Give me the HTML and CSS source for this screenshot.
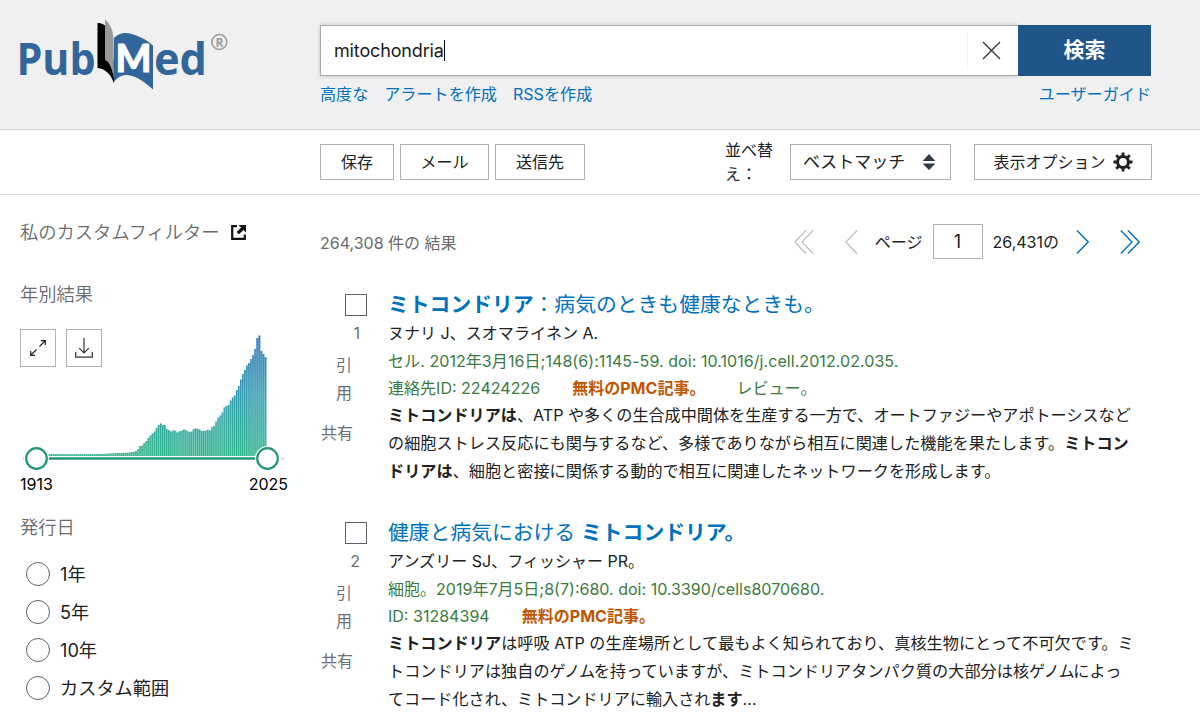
FILE: index.html
```html
<!DOCTYPE html>
<html lang="ja">
<head>
  <meta charset="UTF-8" />
  <title>mitochondria - PubMed</title>
  <link rel="stylesheet" href="styles.css">
</head>
<body>
  <header class="header">
    <a class="logo">
      <svg width="214" height="76" viewBox="16 17 214 76">
        <text class="logo-text" x="16.500" y="74.500" textLength="79" lengthAdjust="spacingAndGlyphs">Pub</text>
        <path d="M97.500 23 Q104 23 107 28 L114 62 V83.500 Q109 69 97.500 68 Z" fill="#000"/>
        <path d="M105 19.500 Q113 26 113.500 38 L114 79 Q111 62 105 60 Z" fill="#999"/>
        <path d="M114 38 Q121 31 132 34 Q145 38 153 45.500 V89.500 Q126 65 114 82 Z" fill="#326599"/>
        <text class="logo-m" x="115.500" y="71.500" textLength="36" lengthAdjust="spacingAndGlyphs">M</text>
        <text class="logo-text" x="154" y="74.500" textLength="53" lengthAdjust="spacingAndGlyphs">ed</text>
        <circle cx="219.300" cy="42" r="7.500" fill="none" stroke="#999" stroke-width="1.500"/>
        <text class="logo-r" x="215.500" y="46.500">R</text>
      </svg>
    </a>
    <div class="search">
      <div class="search-row">
        <div class="search-input"><span class="query">mitochondria</span><i class="caret"></i>
          <span class="clear">
            <svg width="19" height="19" viewBox="0 0 19 19"><path d="M1 1 L18 18 M18 1 L1 18" fill="none" stroke="#333" stroke-width="1.300"/></svg>
          </span>
        </div>
        <button class="search-btn">検索</button>
      </div>
      <div class="search-links">
        <a>高度な</a><a>アラートを作成</a><a>RSSを作成</a><a class="guide">ユーザーガイド</a>
      </div>
    </div>
  </header>

  <div class="toolbar">
    <button class="btn save">保存</button>
    <button class="btn email">メール</button>
    <button class="btn send">送信先</button>
    <div class="sort-label">並べ替え：</div>
    <div class="sort-select"><span>ベストマッチ</span>
      <svg width="12" height="16" viewBox="0 0 12 16"><path d="M0 7 Q0 6.500 .5 6 L6 0 L11.500 6 Q12 6.500 12 7 Z M0 9.500 H12 Q12 10 11.500 10.500 L6 16 L.5 10.500 Q0 10 0 9.500 Z" fill="#323a45"/></svg>
    </div>
    <button class="btn display"><span>表示オプション</span>
      <svg width="20" height="20" viewBox="-10 -10 20 20">
        <circle r="5.400" fill="none" stroke="#212121" stroke-width="3"/>
        <path d="M0 -6V-9.500M0 6V9.500M-6 0H-9.500M6 0H9.500M-4.400 -4.400L-6.800 -6.800M4.400 4.400L6.800 6.800M4.400 -4.400L6.800 -6.800M-4.400 4.400L-6.800 6.800" stroke="#212121" stroke-width="2.800"/>
      </svg>
    </button>
  </div>

  <main class="content">
    <aside class="sidebar">
      <h3 class="my-filters">私のカスタムフィルター
        <svg width="15" height="15" viewBox="0 0 15 15"><path d="M6 1.200H1.200V13.800H13.800V9.500" fill="none" stroke="#111" stroke-width="2.200"/><path d="M7.500 0H15V7.500L12.400 4.900L8 9.300L5.700 7L10.100 2.600Z" fill="#111"/></svg>
      </h3>
      <h3 class="by-year">年別結果</h3>
      <div class="timeline">
        <div class="chart-btns">
          <span class="chart-btn"><svg width="18" height="18" viewBox="0 0 18 18"><path d="M10.500 7.500L16 2M12 1.700H16.300V6M7.500 10.500L2 16M1.700 12V16.300H6" fill="none" stroke="#222" stroke-width="1.200"/></svg></span>
          <span class="chart-btn"><svg width="18" height="20" viewBox="0 0 18 20"><path d="M9 0V15M4.200 10.200L9 15L13.800 10.200M.7 14V19.200H17.300V14" fill="none" stroke="#333" stroke-width="1.200"/></svg></span>
        </div>
        <svg class="chart" width="268" height="146" viewBox="0 0 268 146">
          <defs>
            <linearGradient id="bars" gradientUnits="userSpaceOnUse" x1="0" y1="6" x2="0" y2="127">
              <stop offset="0" stop-color="#1766b0"/>
              <stop offset=".5" stop-color="#2596ab"/>
              <stop offset="1" stop-color="#1fae84"/>
            </linearGradient>
          </defs>
          <g id="barGroup" fill="url(#bars)"></g>
          <path d="M3 129.500H5M262 129.500H264" stroke="#ccc" stroke-width="2"/>
          <path d="M29 129.500H236" stroke="#209677" stroke-width="2.600"/>
          <circle cx="16.500" cy="129.500" r="12.500" fill="#fff"/>
          <circle cx="247.500" cy="129.500" r="12.500" fill="#fff"/>
          <circle class="knob" cx="16.500" cy="129.500" r="10.300"/>
          <circle class="knob" cx="247.500" cy="129.500" r="10.300"/>
        </svg>
        <div class="years"><span>1913</span><span>2025</span></div>
      </div>
      <h3 class="pub-date">発行日</h3>
      <ul class="radios">
        <li><i></i>1年</li>
        <li><i></i>5年</li>
        <li><i></i>10年</li>
        <li><i></i>カスタム範囲</li>
      </ul>
    </aside>

    <section class="results">
      <div class="results-top">
        <span class="amount">264,308 件の 結果</span>
        <div class="pager">
          <svg class="first" width="20" height="24" viewBox="0 0 20 24"><path d="M12 .5L.8 12L12 23.500M19.200 .5L8 12L19.200 23.500" fill="none" stroke="#bbb" stroke-width="1.100"/></svg>
          <svg class="prev" width="13" height="24" viewBox="0 0 13 24"><path d="M12 .5L.8 12L12 23.500" fill="none" stroke="#bbb" stroke-width="1.100"/></svg>
          <span class="page-label">ページ</span>
          <span class="page-num">1</span>
          <span class="page-total">26,431の</span>
          <svg class="next" width="13" height="24" viewBox="0 0 13 24"><path d="M1 .5L12.200 12L1 23.500" fill="none" stroke="#0071bc" stroke-width="1.400"/></svg>
          <svg class="last" width="20" height="24" viewBox="0 0 20 24"><path d="M.8 .5L12 12L.8 23.500M8 .5L19.200 12L8 23.500" fill="none" stroke="#0071bc" stroke-width="1.400"/></svg>
        </div>
      </div>

      <article class="result">
        <div class="actions">
          <i class="checkbox"></i>
          <span class="position">1</span>
          <span class="cite">引用</span>
          <span class="share">共有</span>
        </div>
        <div class="docsum">
          <a class="title"><b>ミトコンドリア</b>：病気のときも健康なときも。</a>
          <div class="authors">ヌナリ J、スオマライネン A.</div>
          <div class="journal wide">セル. 2012年3月16日;148(6):1145-59. doi: 10.1016/j.cell.2012.02.035.</div>
          <div class="journal ids"><span>連絡先ID: 22424226</span><span class="free">無料のPMC記事。</span><span class="review">レビュー。</span></div>
          <div class="snippet"><b>ミトコンドリアは</b>、ATP や多くの生合成中間体を生産する一方で、オートファジーやアポトーシスなど<br><span class="wide">の細胞ストレス反応にも関与するなど、多様でありながら相互に関連した機能を果たします。<b>ミトコン</b></span><br><span class="wide"><b>ドリアは</b>、細胞と密接に関係する動的で相互に関連したネットワークを形成します。</span></div>
        </div>
      </article>

      <article class="result">
        <div class="actions">
          <i class="checkbox"></i>
          <span class="position">2</span>
          <span class="cite">引用</span>
          <span class="share">共有</span>
        </div>
        <div class="docsum">
          <a class="title">健康と病気における <b>ミトコンドリア。</b></a>
          <div class="authors">アンズリー SJ、フィッシャー PR。</div>
          <div class="journal">細胞。2019年7月5日;8(7):680. doi: 10.3390/cells8070680.</div>
          <div class="journal ids"><span>ID: 31284394</span><span class="free">無料のPMC記事。</span></div>
          <div class="snippet"><span class="wide"><b>ミトコンドリア</b>は呼吸 ATP の生産場所として最もよく知られており、真核生物にとって不可欠です。ミ</span><br><span class="wide">トコンドリアは独自の<span class="tight">ゲノム</span>を持っていますが、ミトコンドリアタンパク質の大部分は核<span class="tight">ゲノム</span>によっ</span><br>てコード化され、ミトコンドリアに輸入され<b>ます</b>...</div>
        </div>
      </article>
    </section>
  </main>

  <script>
    // bar heights, one per year 1913 - 2025
    const early = Array(30).fill(1.8).concat([2, 2, 2, 2.2, 2.2, 2.5, 2.5, 2.7, 2.7, 3, 3, 3, 3.2, 3.2, 3.2]);
    const late = [3.5, 4, 4, 5, 7, 10, 10.5, 13, 15, 18, 20.5, 22.5, 24.5, 28, 31, 32.5, 31, 31, 27, 26,
      24.5, 25.5, 25.5, 23.5, 24.5, 25, 26.3, 26.3, 25, 24, 24.5, 27, 27.6, 27, 26.5, 25, 25, 25.5, 26.3, 25.5,
      29, 30, 34.5, 38.5, 40.5, 43.5, 48.5, 50, 51, 55.5, 58.5, 60.5, 66, 70, 76.5, 82, 86, 90.5, 93, 97,
      101, 107, 118, 120.5, 105, 102, 99];
    const group = document.getElementById('barGroup');

    function addBar(x, width, height, opacity) {
      const bar = document.createElementNS('http://www.w3.org/2000/svg', 'rect');
      bar.setAttribute('x', x);
      bar.setAttribute('y', 127 - height);
      bar.setAttribute('width', width);
      bar.setAttribute('height', height);
      bar.setAttribute('opacity', opacity);
      group.appendChild(bar);
    }

    early.concat(late).forEach((h, i) => {
      const x = 16.6 + i * 2.055;
      addBar(x, 2.055, h, 0.6);
      addBar(x, 1.1, h, 0.85);
    });
  </script>
</body>
</html>
```
FILE: styles.css
```css
* {
  box-sizing: border-box;
}

body {
  margin: 0;
  height: 718px;
  overflow: hidden;
  font-family: Inter, "Noto Sans CJK JP", sans-serif;
  font-size: 16px;
  color: #212121;
  background: #fff;
  white-space: nowrap;
}

h3 {
  margin: 0;
  font-weight: 350;
  font-size: 18.300px;
  line-height: 28px;
  color: #6b6b6b;
}

a {
  color: #0071bc;
}

button {
  font-family: inherit;
  font-size: 16px;
  padding: 0;
}

svg {
  display: block;
  flex: none;
}

/* header */
.header {
  display: flex;
  height: 130px;
  background: #f0f0f0;
  border-bottom: 1px solid #d3d4d6;
}

.logo {
  width: 320px;
  padding: 17px 0 0 16px;
}

.logo-text {
  font: bold 44px "Open Sans", sans-serif;
  fill: #326599;
}

.logo-m {
  font: 900 38px Lato, sans-serif;
  fill: #fff;
  stroke: #fff;
  stroke-width: .8;
}

.logo-r {
  font: bold 12px "Open Sans", sans-serif;
  fill: #999;
}

.search {
  width: 831px;
  padding-top: 25px;
}

.search-row {
  display: flex;
  height: 51px;
}

.search-input {
  display: flex;
  flex: 1;
  align-items: center;
  padding-left: 13px;
  background: #fff;
  border: 1px solid #aaa;
  border-right: 0;
  box-shadow: 0 0 4px rgba(0, 0, 0, .2);
}

.query {
  font-size: 18px;
  letter-spacing: -.15px;
}

.caret {
  width: 1px;
  height: 21px;
  background: #000;
}

.clear {
  display: flex;
  align-items: center;
  justify-content: center;
  width: 51px;
  height: 38px;
  margin-left: auto;
  padding-right: 3px;
  border-left: 1px solid #f0f0f0;
}

.search-btn {
  width: 133px;
  padding-bottom: 5px;
  border: 0;
  background: #20558a;
  color: #fff;
  font-size: 21px;
  font-weight: bold;
}

.search-links {
  display: flex;
  gap: 16px;
  margin-top: 6px;
  font-size: 16.100px;
  line-height: 24px;
}

.guide {
  margin-left: auto;
}

/* toolbar */
.toolbar {
  display: flex;
  align-items: center;
  height: 65px;
  padding-left: 320px;
  border-bottom: 1px solid #d6d7d9;
}

.btn,
.sort-select {
  display: flex;
  align-items: center;
  justify-content: center;
  height: 36px;
  border: 1px solid #aeb0b5;
  background: #fff;
  color: #212121;
}

.btn {
  padding-bottom: 2px;
}

.save {
  width: 74px;
}

.email {
  width: 89px;
  margin: 0 6px;
}

.send {
  width: 90px;
}

.sort-label {
  width: 50px;
  margin-left: 140px;
  line-height: 24px;
  white-space: normal;
}

.sort-select {
  justify-content: space-between;
  width: 161px;
  margin-left: 15px;
  padding: 0 15px 0 12px;
  font-size: 17px;
}

.sort-select span {
  margin-top: -3px;
}

.display {
  width: 178px;
  margin-left: 23px;
  padding-bottom: 0;
  gap: 7px;
}

.display span {
  margin-top: -2px;
}

/* sidebar */
.content {
  display: flex;
}

.sidebar {
  width: 320px;
  padding: 23px 0 0 20px;
}

.my-filters {
  display: flex;
  align-items: center;
  gap: 11px;
}

.by-year {
  margin-top: 34px;
}

.timeline {
  position: relative;
  height: 172px;
  margin-top: 21px;
}

.chart-btns {
  position: absolute;
  display: flex;
  gap: 10px;
}

.chart-btn {
  display: flex;
  align-items: center;
  justify-content: center;
  width: 36px;
  height: 38px;
  border: 1px solid #aeb0b5;
}

.knob {
  fill: #fff;
  stroke: #209677;
  stroke-width: 2.200;
}

.years {
  display: flex;
  justify-content: space-between;
  width: 268px;
  line-height: 18px;
  color: #000;
}

.pub-date {
  margin-top: 12px;
}

.radios {
  margin: 14px 0 0;
  padding: 0 0 0 6px;
  list-style: none;
  font-size: 18.200px;
  line-height: 36px;
}

.radios li {
  display: flex;
  align-items: center;
  gap: 10px;
  height: 38px;
}

.radios i {
  width: 24px;
  height: 24px;
  border: 1px solid #5b616b;
  border-radius: 50%;
}

/* results */
.results {
  width: 831px;
}

.results-top {
  display: flex;
  align-items: center;
  justify-content: space-between;
  height: 95px;
  padding-bottom: 2px;
}

.amount {
  color: #6b6b6b;
}

.pager {
  display: flex;
  align-items: center;
  margin-right: 11px;
}

.prev {
  margin-left: 31px;
}

.page-label {
  margin: -2px 0 0 17px;
}

.page-num {
  width: 50px;
  height: 35px;
  margin: 0 10px;
  border: 1px solid #aeb0b5;
  font-size: 18px;
  line-height: 33px;
  text-align: center;
}

.page-total {
  margin-top: -2px;
}

.next {
  margin-left: 17px;
}

.last {
  margin-left: 31px;
}

.result {
  display: flex;
  height: 228px;
}

.actions {
  display: flex;
  flex-direction: column;
  align-items: flex-end;
  width: 33px;
  margin-right: 35px;
  color: #6b7078;
}

.checkbox {
  width: 22px;
  height: 22px;
  margin: 4px -14px 0 0;
  border: 1px solid #5b616b;
}

.position {
  margin: 5px -7px 0 0;
  line-height: 24px;
}

.cite {
  width: 17px;
  margin-top: 6px;
  line-height: 28px;
  white-space: normal;
}

.share {
  margin-top: 12px;
  line-height: 28px;
}

.docsum {
  line-height: 27.700px;
}

.title {
  display: block;
  margin-bottom: 1px;
  font-size: 20.800px;
  line-height: 29px;
}

.authors,
.journal {
  font-size: 16.050px;
}

.journal {
  color: #3c7a3f;
}

.wide {
  letter-spacing: .05px;
}

.ids {
  display: flex;
}

.free {
  margin-left: 32px;
  color: #c05600;
  font-weight: bold;
}

.review {
  margin-left: 31px;
}

.snippet {
  margin-top: -1px;
  font-size: 16.130px;
}

.tight {
  letter-spacing: -1.200px;
}
```
